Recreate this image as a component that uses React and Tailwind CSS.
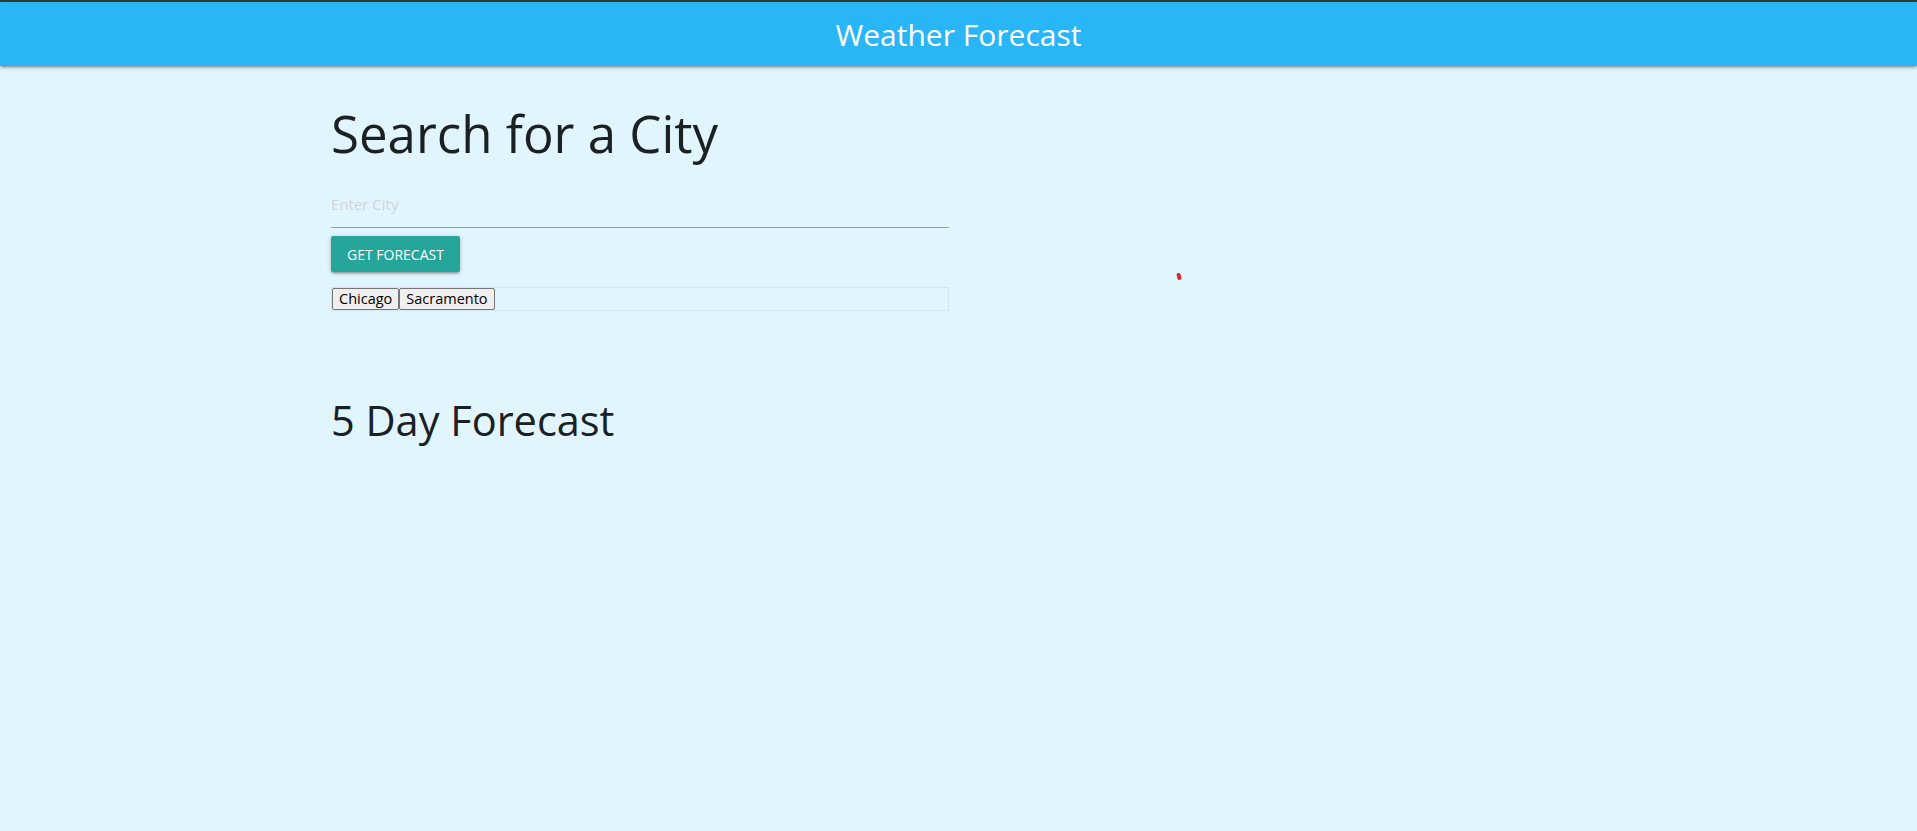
export default function App() {
  return (
    <div className="relative min-h-screen bg-[#e1f5fe] font-['Open_Sans',sans-serif] text-[#1b2023]">
      <div className="h-[2px] bg-[#3a3a3a]" />
      <nav className="relative z-10 flex h-16 items-center justify-center bg-[#29b6f6] shadow-[0_2px_2px_0_rgba(0,0,0,0.14),0_3px_1px_-2px_rgba(0,0,0,0.12),0_1px_5px_0_rgba(0,0,0,0.2)]">
        <span className="pt-[2px] text-[30px] leading-none text-white">Weather Forecast</span>
      </nav>

      <main className="flow-root">
        <div className="ml-[331px] w-[618px]">
          <h1 className="mt-[42px] text-[51px] font-normal leading-[50px]">Search for a City</h1>

          <input
            placeholder="Enter City"
            className="mt-[22px] h-12 w-full border-b border-[#9e9e9e] bg-transparent text-[15px] outline-none placeholder:text-[#cfd6d9]"
          />

          <button className="mt-2 h-9 rounded-[2px] bg-[#26a69a] px-4 text-[14px] uppercase text-white shadow-[0_2px_2px_0_rgba(0,0,0,0.14),0_3px_1px_-2px_rgba(0,0,0,0.12),0_1px_5px_0_rgba(0,0,0,0.2)]">
            Get Forecast
          </button>

          <div className="mt-[15px] flex h-6 border border-[#d3e5ee]">
            {['Chicago', 'Sacramento'].map((city) => (
              <button
                key={city}
                className="h-[22px] rounded-[2px] border border-[#767676] bg-[#efefef] px-[6px] text-[14.5px] leading-none text-black"
              >
                {city}
              </button>
            ))}
          </div>

          <h2 className="mt-[88px] text-[41.5px] font-normal leading-[42px]">5 Day Forecast</h2>
        </div>
      </main>

      {/* stray red mark */}
      <span className="absolute left-[1177px] top-[273px] h-[7px] w-[4px] rotate-[-15deg] rounded-full bg-[#d8262b]" />
    </div>
  )
}
